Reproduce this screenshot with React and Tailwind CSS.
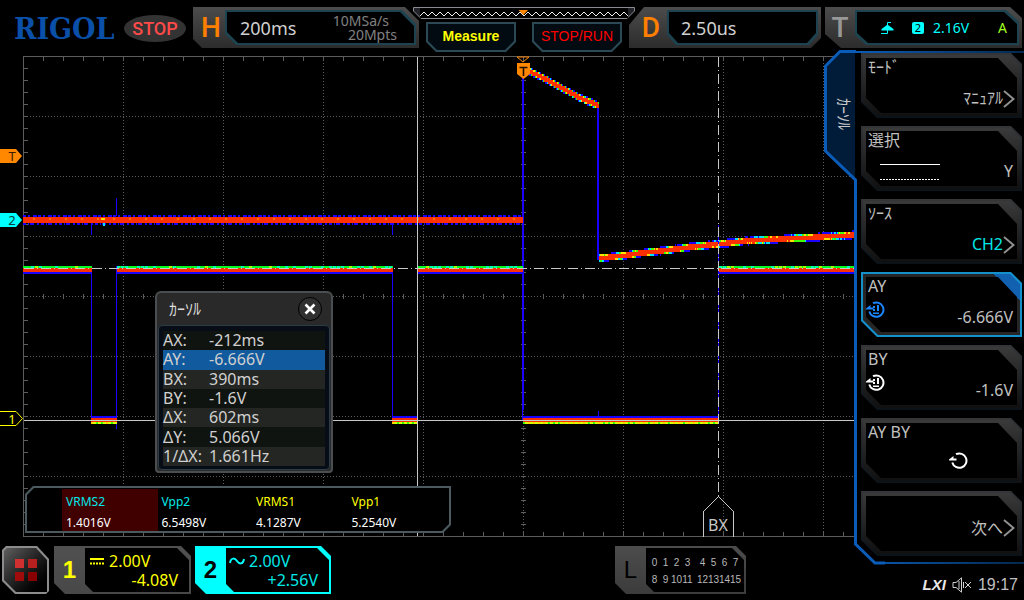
import React from 'react';

const GRID = '#5c5c5c';
const RED = '#ff3000';
const BLUE = '#1a00ff';

const range = (from, to, step) => {
  const out = [];
  for (let v = from; v <= to; v += step) out.push(v);
  return out;
};

// small repeatable noise source, 0..1
const noise = (n) => {
  const v = Math.sin(n * 12.9898) * 43758.5453;
  return v - Math.floor(v);
};

const interpolate = (points, x) => {
  for (let i = 1; i < points.length; i++) {
    const [x0, y0] = points[i - 1];
    const [x1, y1] = points[i];
    if (x <= x1) return y0 + ((x - x0) / (x1 - x0)) * (y1 - y0);
  }
  return points[points.length - 1][1];
};

const FALL = [[526, 70], [545, 79], [563, 89], [580, 98], [599, 106]];
const RISE = [[599, 258], [620, 256], [642, 253], [660, 251], [690, 247], [719, 244], [745, 241], [780, 239], [820, 237], [854, 235]];

const heat = (d) => {
  if (d < 2.7) return RED;
  if (d < 3) return '#ffe000';
  if (d < 3.3) return '#40ff00';
  if (d < 3.6) return '#00e0ff';
  if (d < 4.2) return BLUE;
  return null;
};

const DriftTrace = ({ points }) => {
  const cells = [];
  const start = points[0][0];
  const end = points[points.length - 1][0];
  for (let x = start; x < end; x++) {
    const c = interpolate(points, x);
    const base = Math.floor(c / 2) * 2;
    for (let y = base - 6; y <= base + 6; y += 2) {
      const fill = heat(Math.abs(y + 1 - c) + noise(Math.floor(x / 2) * 7.31 + y * 1.73) * 0.6);
      if (fill) cells.push(<rect key={`${x}-${y}`} x={x} y={y} width="1" height="2" fill={fill} />);
    }
  }
  return <g>{cells}</g>;
};

const HighLevel = ({ from, to }) => (
  <g>
    <rect x={from} y="266" width={to - from} height="2" fill="#00ff20" />
    {range(from, to - 4, 4).map((x) => (
      <rect key={x} x={x} y="266" width="3" height="2" fill={noise(x) > 0.7 ? '#00ffb0' : noise(x) > 0.55 ? '#a0ff00' : '#00ff20'} />
    ))}
    <rect x={from} y="268" width={to - from} height="4" fill={RED} />
    <rect x={from} y="272" width={to - from} height="2" fill={BLUE} />
  </g>
);

const LowLevel = ({ from, to }) => (
  <g>
    <rect x={from} y="416" width={to - from} height="2" fill={BLUE} />
    <rect x={from} y="418" width={to - from} height="4" fill={RED} />
    <rect x={from} y="422" width={to - from} height="2" fill="#d8ff00" />
    {range(from, to - 3, 5).map((x) => (
      <rect key={x} x={x} y="422" width="2" height="2" fill={noise(x) > 0.5 ? '#40ff00' : '#ffd000'} />
    ))}
  </g>
);

const Plot = () => (
  <svg viewBox="0 50 854 490" className="block w-full h-auto" shapeRendering="crispEdges">
    {/* Graticule */}
    <g stroke={GRID} fill="none">
      <path d="M854 56.5H23.5V536.5H854" />
      {range(123, 823, 100).map((x) => (
        <line key={x} x1={x + 0.5} x2={x + 0.5} y1="57" y2="536" strokeDasharray="1 2" />
      ))}
      {range(116, 476, 60).map((y) => (
        <line key={y} x1="24" x2="854" y1={y + 0.5} y2={y + 0.5} strokeDasharray="1 2" />
      ))}
      {range(43, 843, 20).map((x) => (
        <path key={x} d={`M${x + 0.5} 57v4M${x + 0.5} 532v4M${x + 0.5} 294v5`} />
      ))}
      {range(68, 524, 12).map((y) => (
        <path key={y} d={`M24 ${y + 0.5}h4M521 ${y + 0.5}h5`} />
      ))}
    </g>

    {/* CH2 */}
    <g stroke={BLUE}>
      <line x1="23" x2="523" y1="216" y2="216" strokeWidth="2" strokeDasharray="3 2 2 3 4 1" />
      <line x1="23" x2="523" y1="224" y2="224" strokeWidth="2" strokeDasharray="3 2 1 1 4 3 2 2" />
      <path d="M91.5 224v11M392.5 224v11M116.5 198v18" />
      <path d="M523 78V410" strokeWidth="2" />
      <path d="M598 106V260" strokeWidth="2" />
    </g>
    <rect x="23" y="217" width="500" height="6" fill={RED} />
    {range(33, 513, 16).map((x) => (
      <rect key={x} x={x} y="218" width="2" height="2" fill="#ff7000" />
    ))}
    <rect x="101" y="218" width="4" height="2" fill="#ffd800" />
    <rect x="103" y="223" width="2" height="3" fill="#00e0ff" />
    <DriftTrace points={FALL} />
    <DriftTrace points={RISE} />

    {/* CH1 */}
    <path d="M91.5 266V418M116.5 266V429M392.5 266V418M522.5 266V420M598.5 411v6" stroke={BLUE} />
    <path d="M718.5 225V420" stroke={BLUE} />
    <HighLevel from={23} to={92} />
    <HighLevel from={117} to={393} />
    <HighLevel from={418} to={523} />
    <HighLevel from={719} to={854} />
    <LowLevel from={91} to={117} />
    <LowLevel from={392} to={418} />
    <LowLevel from={523} to={719} />

    {/* Cursors */}
    <g stroke="#c8c8c8" fill="none">
      <path d="M417.5 57V536M24 420.5H854" />
      <path d="M718.5 57V497M24 268.5H854" strokeDasharray="10 3 1 3" />
      <path d="M703.5 537V511.5L718.5 496.5L733.5 511.5V537" />
    </g>
    <text x="718" y="531" textAnchor="middle" fontSize="16" fill="#c8c8c8">BX</text>

    {/* Level and trigger markers */}
    <g textAnchor="middle" fontSize="13" shapeRendering="auto">
      <path d="M0 149H16L22 156L16 163H0Z" fill="#ff8800" />
      <text x="12" y="161" fill="#3a1c00">T</text>
      <path d="M0 213H16L22 220L16 227H0Z" fill="#00ffff" />
      <text x="12" y="225" fill="#003a3a">2</text>
      <path d="M0 411.5H16L22.5 418.5L16 425.5H0" fill="#000" stroke="#ffff00" />
      <text x="12" y="424" fill="#ffff00">1</text>
      <path d="M517 57H529L523 62Z" fill="none" stroke="#ff8800" />
      <path d="M517 63H530V74L523.5 79L517 74Z" fill="#ff8800" />
      <path d="M519.5 67.5H527.5M523.5 67V76" stroke="#201000" strokeWidth="1.6" />
    </g>
  </svg>
);

const HeaderPanel = ({ label, labelClass, outer, clip, children }) => (
  <div className={`flex h-[41px] p-[3px] pl-0 bg-linear-to-b from-[#4c4c4c] to-[#2c2c2c] ${outer}`}>
    <span className={`flex items-center justify-center text-[28px] leading-none font-medium font-[Roboto,sans-serif] ${labelClass}`}>{label}</span>
    <div className={`flex-1 p-[2px] bg-[#1d4350] ${clip}`}>
      <div className={`h-full flex items-center bg-black ${clip}`}>{children}</div>
    </div>
  </div>
);

const SoftButton = ({ children }) => (
  <button className="w-[90px] h-[30px] p-[2px] bg-[#2c4a55] [clip-path:polygon(0_0,100%_0,100%_20px,80px_100%,10px_100%,0_20px)]">
    <span className="flex items-center justify-center h-full pb-[2px] bg-[#020a12] [clip-path:polygon(0_0,100%_0,100%_17px,77px_100%,9px_100%,0_17px)]">{children}</span>
  </button>
);

const Header = () => (
  <header className="flex h-[50px] pt-[7px] pr-[2px]">
    <div className="w-[110px] ml-[14px] flex items-center h-[43px] shrink-0">
      <span className="text-[30px] leading-none font-bold text-[#0a4fa8] font-['DejaVu_Serif_Condensed','DejaVu_Serif',serif]">RIGOL</span>
    </div>
    <div className="w-[62px] h-[27px] mt-2 mr-[7px] shrink-0 rounded-[50%] bg-[#333333] flex items-center justify-center text-lg leading-none font-medium text-[#ff4a4a] font-[Roboto,sans-serif]">
      STOP
    </div>

    <HeaderPanel
      label="H"
      labelClass="w-8 pl-1 text-[#ff8000]"
      outer="w-[226px] shrink-0 [clip-path:polygon(0_0,212px_0,100%_14px,100%_100%,9px_100%,0_32px)]"
      clip="[clip-path:polygon(0_0,calc(100%-14px)_0,100%_14px,100%_100%,11px_100%,0_calc(100%-11px))]"
    >
      <span className="pl-[13px] text-lg text-[#d0d0d0]">200ms</span>
      <span className="ml-auto pr-[17px] flex flex-col items-end text-sm leading-[14px] text-[#808080]">
        <span className="pr-2">10MSa/s</span>
        <span>20Mpts</span>
      </span>
    </HeaderPanel>

    <div className="w-[222px] shrink-0 -mx-[6px] z-10">
      <svg viewBox="0 0 222 12" className="block w-full h-3">
        <path d="M0.5 0.5H221.5V4L214 11.5H8L0.5 4Z" fill="#20242a" stroke="#8a8a90" />
        <rect x="7" y="1" width="208" height="10" fill="#000" />
        <polyline
          points={range(7, 215, 4).map((x, i) => `${x},${i % 2 ? 5 : 9}`).join(' ')}
          fill="none"
          stroke="#f0f0f0"
        />
        <path d="M105.500 3H115L110.500 8Z" fill="#ff8800" />
      </svg>
      <div className="flex justify-between px-[13px] pt-[3px] text-sm font-['Liberation_Sans',sans-serif]">
        <SoftButton><b className="text-[#ffff00]">Measure</b></SoftButton>
        <SoftButton><span className="text-[#ff0000]">STOP/RUN</span></SoftButton>
      </div>
    </div>

    <HeaderPanel
      label="D"
      labelClass="w-[38px] pl-[6px] text-[#ff8000]"
      outer="w-[192px] shrink-0 [clip-path:polygon(15px_0,100%_0,100%_31px,182px_100%,0_100%,0_18px)]"
      clip="[clip-path:polygon(0_0,100%_0,100%_calc(100%-10px),calc(100%-9px)_100%,9px_100%,0_calc(100%-10px))]"
    >
      <span className="pl-3 text-lg text-[#d0d0d0]">2.50us</span>
    </HeaderPanel>

    <HeaderPanel
      label="T"
      labelClass="w-[30px] text-[#989898]"
      outer="flex-1 ml-1 [clip-path:polygon(0_0,calc(100%-12px)_0,100%_11px,100%_100%,16px_100%,0_27px)]"
      clip="[clip-path:polygon(0_0,calc(100%-13px)_0,100%_12px,100%_100%,11px_100%,0_calc(100%-10px))]"
    >
      <svg viewBox="0 0 14 14" className="w-[14px] h-[14px] ml-6">
        <path d="M0 12.500H6.500V1.500H10" fill="none" stroke="#00ffff" />
        <path d="M0.500 9.500V8L6 4H7L12.500 8V9.500Z" fill="#00ffff" />
      </svg>
      <span className="w-3 h-3 ml-[17px] rounded-xs bg-[#00ffff] text-black text-[11px] leading-3 text-center">2</span>
      <span className="ml-[9px] text-sm text-[#00ffff]">2.16V</span>
      <span className="ml-auto mr-[10px] text-sm text-[#a0ff20]">A</span>
    </HeaderPanel>
  </header>
);

const CURSOR_ROWS = [
  ['AX:', '-212ms', 'bg-[#101410]'],
  ['AY:', '-6.666V', 'bg-[#115a9e]'],
  ['BX:', '390ms', 'bg-[#242624]'],
  ['BY:', '-1.6V', 'bg-[#101410]'],
  ['ΔX:', '602ms', 'bg-[#242624]'],
  ['ΔY:', '5.066V', 'bg-[#101410]'],
  ['1/ΔX:', '1.661Hz', 'bg-[#242624]'],
];

const CursorDialog = () => (
  <section aria-label="ｶｰｿﾙ" className="absolute left-[155px] top-[241px] w-[178px] rounded-t-md rounded-b-sm border-2 border-[#4a4e50] bg-[#292929]">
    <div className="flex items-center justify-between h-8 pl-3 pr-[9px]">
      <h2 className="text-base text-[#dcdcdc]">ｶｰｿﾙ</h2>
      <button aria-label="close" className="w-6 h-6 flex items-center justify-center rounded-full border border-black bg-[#303030]">
        <svg viewBox="0 0 12 12" className="w-3 h-3">
          <path d="M1.500 1.500L10.500 10.500M10.500 1.500L1.500 10.500" stroke="#fff" strokeWidth="2.600" />
        </svg>
      </button>
    </div>
    <div className="mx-px mb-px px-1 pt-[5px] pb-[3px] rounded-sm border border-[#2c3c46] bg-[#060d16]">
      <table className="w-full h-[135px] border-collapse text-base leading-[19px] text-[#d0d0d0]">
        <tbody>
          {CURSOR_ROWS.map(([name, value, bg]) => (
            <tr key={name} className={bg}>
              <th scope="row" className="w-[46px] p-0 text-left font-normal whitespace-nowrap">{name}</th>
              <td className="p-0">{value}</td>
            </tr>
          ))}
        </tbody>
      </table>
    </div>
  </section>
);

const Measurements = () => (
  <div className="absolute left-[25px] bottom-[7px] p-[2px] bg-[#4c5a60] [clip-path:polygon(8px_0,100%_0,100%_calc(100%-8px),calc(100%-8px)_100%,0_100%,0_8px)]">
    <div className="pl-[35px] pr-[5px] pt-px bg-black [clip-path:polygon(7px_0,100%_0,100%_calc(100%-7px),calc(100%-7px)_100%,0_100%,0_7px)]">
      <table className="table-fixed w-[382px] text-xs leading-4 border-collapse">
        <thead>
          <tr className="text-left">
            <th className="p-0 pl-1 pt-[5px] font-normal bg-[#400000] text-[#00e8e8]">VRMS2</th>
            <th className="p-0 pl-1 pt-[5px] font-normal text-[#00e8e8]">Vpp2</th>
            <th className="p-0 pl-[3px] pt-[5px] font-normal text-[#ffff00]">VRMS1</th>
            <th className="p-0 pl-[3px] pt-[5px] font-normal text-[#ffff00]">Vpp1</th>
          </tr>
        </thead>
        <tbody>
          <tr className="text-white">
            <td className="p-0 pl-1 pt-[5px] bg-[#400000]">1.4016V</td>
            <td className="p-0 pl-1 pt-[5px]">6.5498V</td>
            <td className="p-0 pl-[3px] pt-[5px]">4.1287V</td>
            <td className="p-0 pl-[3px] pt-[5px]">5.2540V</td>
          </tr>
        </tbody>
      </table>
    </div>
  </div>
);

const ChannelPanel = ({ label, labelClass, frame, className, children }) => (
  <button className={`flex h-12 p-[2px] pl-0 text-left [clip-path:polygon(0_0,calc(100%-10px)_0,100%_10px,100%_100%,11px_100%,0_calc(100%-11px))] ${frame} ${className}`}>
    <span className={`w-[31px] h-full flex items-center justify-center font-['Liberation_Sans',sans-serif] text-2xl ${labelClass}`}>{label}</span>
    <span className="flex-1 h-full bg-black [clip-path:polygon(0_0,calc(100%-12px)_0,100%_12px,100%_100%,8px_100%,0_calc(100%-8px))]">{children}</span>
  </button>
);

const DigitalRow = ({ digits }) => (
  <span className="flex justify-between w-[92px]">
    <span className="grid grid-cols-[repeat(4,11px)] text-center">{digits.slice(0, 4).map((d) => <span key={d}>{d}</span>)}</span>
    <span className="grid grid-cols-[repeat(4,11px)] text-center">{digits.slice(4).map((d) => <span key={d}>{d}</span>)}</span>
  </span>
);

const Footer = () => (
  <footer className="flex pt-[6px] pl-[2px]">
    <button aria-label="menu" className="w-[47px] h-12 p-[2px] bg-[#8c8c8c] [clip-path:polygon(4px_0,35px_0,100%_13px,100%_calc(100%-3px),calc(100%-3px)_100%,13px_100%,0_35px,0_4px)]">
      <span className="h-full grid grid-cols-[9px_9px] content-center justify-center gap-1 bg-linear-to-br from-[#606060] to-black [clip-path:polygon(3px_0,32px_0,100%_12px,100%_100%,12px_100%,0_32px,0_3px)]">
        <span className="h-[9px] bg-[#d03030]" />
        <span className="h-[9px] bg-[#b82020]" />
        <span className="h-[9px] bg-[#a00c0c]" />
        <span className="h-[9px] bg-[#880000]" />
      </span>
    </button>

    <ChannelPanel label="1" labelClass="font-bold text-[#ffff00]" frame="bg-linear-to-b from-[#505050] to-[#484848]" className="w-[137px] ml-[5px]">
      <span className="flex items-center h-[22px] pt-1 pl-[5px] text-base text-[#ffff00]">
        <svg viewBox="0 0 14 7" className="w-[14px] h-[7px] mr-[5px]">
          <path d="M0 1H14" stroke="#ffff00" strokeWidth="2" />
          <path d="M0 5.500H14" stroke="#ffff00" strokeWidth="2" strokeDasharray="2 1" />
        </svg>
        2.00V
      </span>
      <span className="block pr-[11px] text-right text-base leading-5 text-[#ffff00]">-4.08V</span>
    </ChannelPanel>

    <ChannelPanel label="2" labelClass="font-bold text-black" frame="bg-[#00ffff]" className="w-[136px] ml-1">
      <span className="flex items-center h-[22px] pt-1 pl-[3px] text-base text-[#00e8e8]">
        <svg viewBox="0 0 16 8" className="w-4 h-2 mr-1">
          <path d="M1 6C2 0 6 1 8 4S14 8 15 2" fill="none" stroke="#00ffff" strokeWidth="2" />
        </svg>
        2.00V
      </span>
      <span className="block pr-[11px] text-right text-base leading-5 text-[#00e8e8]">+2.56V</span>
    </ChannelPanel>

    <ChannelPanel label="L" labelClass="text-black" frame="bg-linear-to-b from-[#4c4c4c] to-[#3c3c3c]" className="w-[131px] ml-auto mr-[108px]">
      <span className="flex flex-col gap-[3px] pt-2 pl-[3px] text-[10px] leading-[14px] text-[#b8b8b8] font-['Liberation_Sans',sans-serif]">
        <DigitalRow digits={['0', '1', '2', '3', '4', '5', '6', '7']} />
        <DigitalRow digits={['8', '9', '10', '11', '12', '13', '14', '15']} />
      </span>
    </ChannelPanel>
  </footer>
);

const Chevron = () => (
  <svg viewBox="0 0 12 18" className="w-3 h-[18px] -mr-[2px]">
    <path d="M1 1L10.500 9L1 17" fill="none" stroke="#909090" strokeWidth="2" />
  </svg>
);

const KnobIcon = ({ color, keypad, className }) => (
  <svg viewBox="0 0 19 17" className={`w-[19px] h-[17px] ${className}`} fill="none" stroke={color}>
    <path d="M7 2.200A7.200 7.200 0 1 1 3.300 10.500" strokeWidth="2" />
    <path d="M0 7.500L4.500 4V6.500H7.500V8.500H0Z" fill={color} stroke="none" />
    {keypad && (
      <g fill={color} stroke="none">
        <rect x="7" y="5" width="2" height="2" />
        <rect x="7" y="8" width="2" height="2" />
        <rect x="11" y="4" width="2" height="6" />
        <rect x="7" y="11.500" width="6" height="1.500" />
      </g>
    )}
  </svg>
);

const MenuItem = ({ label, active, middle, children }) => (
  <button
    className={`block w-full h-[65px] p-[2px] text-left [clip-path:polygon(0_0,calc(100%-11px)_0,100%_11px,100%_100%,16px_100%,0_calc(100%-16px))] ${
      active ? 'bg-[#1490cc]' : 'bg-linear-to-b from-[#343638] to-[#0b1218]'
    }`}
  >
    <span
      className={`block h-full p-[3px] [clip-path:polygon(0_0,calc(100%-10px)_0,100%_10px,100%_100%,15px_100%,0_calc(100%-15px))] ${
        active ? 'bg-[linear-gradient(225deg,#1260b0_19px,#262626_19px)]' : 'bg-linear-to-b from-[#3a3a3a] to-[#101010]'
      }`}
    >
      <span className="flex flex-col h-full pl-[2px] pr-1 bg-black text-base leading-5 text-[#c0c0c0] [clip-path:polygon(0_0,calc(100%-19px)_0,100%_20px,100%_100%,15px_100%,0_calc(100%-15px))]">
        {label && <span className="h-5 leading-[18px]">{label}</span>}
        <span className={`flex flex-1 justify-end ${middle ? 'items-center pb-1' : 'items-end pb-[5px]'}`}>{children}</span>
      </span>
    </span>
  </button>
);

const SideMenu = () => (
  <aside className="relative pt-[3px] pb-[9px] pl-[7px] pr-[2px] bg-black">
    <svg viewBox="824 50 200 515" className="absolute top-0 -left-[30px] w-[200px] h-[515px] pointer-events-none">
      <defs>
        <linearGradient id="edge" x1="0" x2="1">
          <stop offset="0" stopColor="#0a5cb8" />
          <stop offset="1" stopColor="#04284e" />
        </linearGradient>
      </defs>
      <path d="M840 52H855V179L826 151V66Z" fill="#001c38" />
      <path d="M855 51H1024V53H855ZM875 562H1024V564H875Z" fill="url(#edge)" />
      <path d="M856 51.500H840L825.500 66V151L855.500 180V544L875 563H885" fill="none" stroke="#0a5cb8" strokeWidth="3" />
    </svg>
    <span className="absolute top-12 -left-[18px] text-base leading-4 text-[#c8c8c8] [writing-mode:vertical-rl] [text-orientation:sideways]">ｶｰｿﾙ</span>

    <nav className="relative flex flex-col gap-2">
      <MenuItem label="ﾓｰﾄﾞ"><span>ﾏﾆｭｱﾙ</span><Chevron /></MenuItem>
      <MenuItem label="選択">
        <svg viewBox="0 0 60 18" className="w-[60px] h-[18px] ml-3 mr-auto">
          <path d="M0 1.500H60" stroke="#fff" />
          <path d="M0 16.500H60" stroke="#fff" strokeDasharray="2 1" />
        </svg>
        <span>Y</span>
      </MenuItem>
      <MenuItem label="ｿｰｽ"><span className="text-[#00e8e8]">CH2</span><Chevron /></MenuItem>
      <MenuItem label="AY" active>
        <KnobIcon color="#1a86ff" keypad className="self-start mt-1 -ml-[2px] mr-auto" />
        <span>-6.666V</span>
      </MenuItem>
      <MenuItem label="BY">
        <KnobIcon color="#ffffff" keypad className="self-start mt-1 -ml-[2px] mr-auto" />
        <span>-1.6V</span>
      </MenuItem>
      <MenuItem label="AY BY"><KnobIcon color="#ffffff" className="mr-[45px] mb-1" /></MenuItem>
      <MenuItem middle><span className="pt-3">次へ</span><span className="pt-3"><Chevron /></span></MenuItem>
    </nav>
  </aside>
);

const StatusBar = () => (
  <div className="flex items-center justify-end h-[35px] pt-[5px] pr-[6px] font-['Liberation_Sans',sans-serif]">
    <span className="text-[15px] font-bold italic text-[#e8e8e8]">LXI</span>
    <svg viewBox="0 0 20 16" className="w-5 h-4 mx-[6px]" fill="none" stroke="#d0d0d0">
      <path d="M1 5.500H4L9.500 0.800V15.200L4 10.500H1Z" />
      <path d="M7 4V12M11.500 5V11" />
      <path d="M13 5L19 11M19 5L13 11" />
    </svg>
    <span className="text-base text-[#c0c0c0]">19:17</span>
  </div>
);

const App = () => {
  return (
    <div className="min-h-screen bg-black font-['Noto_Sans','Noto_Sans_CJK_JP',sans-serif]">
      <Header />
      <div className="flex items-start">
        <main className="flex-1 min-w-0">
          <div className="relative">
            <Plot />
            <CursorDialog />
            <Measurements />
          </div>
          <Footer />
        </main>
        <div className="w-[170px] shrink-0">
          <SideMenu />
          <StatusBar />
        </div>
      </div>
    </div>
  );
};

export default App;
